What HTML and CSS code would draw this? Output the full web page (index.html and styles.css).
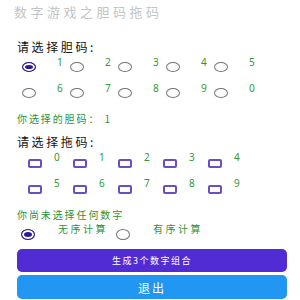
FILE: index.html
```html
<!DOCTYPE html>
<html lang="zh-CN">
<head>
  <meta charset="UTF-8">
  <meta name="viewport" content="width=device-width, initial-scale=1.0">
  <title>数字游戏之胆码拖码</title>
  <link rel="stylesheet" href="styles.css">
</head>
<body>
  <div class="page">
    <div class="title">数字游戏之胆码拖码</div>
    <div class="content">
      <div class="label">请选择胆码:</div>
      <div class="radio-grid">
        <div class="opt"><span class="radio checked"></span><span class="num">1</span></div>
        <div class="opt"><span class="radio"></span><span class="num">2</span></div>
        <div class="opt"><span class="radio"></span><span class="num">3</span></div>
        <div class="opt"><span class="radio"></span><span class="num">4</span></div>
        <div class="opt"><span class="radio"></span><span class="num">5</span></div>
        <div class="opt"><span class="radio"></span><span class="num">6</span></div>
        <div class="opt"><span class="radio"></span><span class="num">7</span></div>
        <div class="opt"><span class="radio"></span><span class="num">8</span></div>
        <div class="opt"><span class="radio"></span><span class="num">9</span></div>
        <div class="opt"><span class="radio"></span><span class="num">0</span></div>
      </div>
      <div class="hint">你选择的胆码： 1</div>
      <div class="label">请选择拖码:</div>
      <div class="check-grid">
        <div class="opt"><span class="box"></span><span class="num">0</span></div>
        <div class="opt"><span class="box"></span><span class="num">1</span></div>
        <div class="opt"><span class="box"></span><span class="num">2</span></div>
        <div class="opt"><span class="box"></span><span class="num">3</span></div>
        <div class="opt"><span class="box"></span><span class="num">4</span></div>
        <div class="opt"><span class="box"></span><span class="num">5</span></div>
        <div class="opt"><span class="box"></span><span class="num">6</span></div>
        <div class="opt"><span class="box"></span><span class="num">7</span></div>
        <div class="opt"><span class="box"></span><span class="num">8</span></div>
        <div class="opt"><span class="box"></span><span class="num">9</span></div>
      </div>
      <div class="hint">你尚未选择任何数字</div>
      <div class="mode-row">
        <div class="mode"><span class="radio checked"></span><span class="mode-text">无序计算</span></div>
        <div class="mode"><span class="radio"></span><span class="mode-text">有序计算</span></div>
      </div>
      <button class="btn btn-gen">生成3个数字组合</button>
      <button class="btn btn-exit">退出</button>
    </div>
  </div>
</body>
</html>
```

FILE: styles.css
```css
body {
  margin: 0;
  background: #fff;
  font-family: "Noto Sans CJK SC", "Noto Sans", sans-serif;
}
.page {
  width: 300px;
  height: 300px;
  overflow: hidden;
}
.title {
  height: 24px;
  line-height: 24px;
  padding-left: 14px;
  font-size: 13px;
  letter-spacing: 3.5px;
  color: #c4c4c4;
}
.content {
  padding: 0 13px 0 17px;
}
.label {
  margin-top: 15px;
  height: 15px;
  line-height: 15px;
  font-size: 12px;
  letter-spacing: 2.6px;
  color: #111;
}
.hint {
  margin-top: 8px;
  height: 14px;
  line-height: 13px;
  font-size: 10px;
  letter-spacing: 1.9px;
  color: #2e9234;
}
.hint + .label {
  margin-top: 8px;
}
.radio-grid,
.check-grid {
  display: grid;
  grid-template-columns: repeat(5, 48px);
  row-gap: 4px;
  margin-top: 2px;
  margin-left: 5px;
}
.check-grid {
  grid-template-columns: repeat(5, 45px);
  margin-top: 3px;
  margin-left: 11px;
}
.opt {
  display: flex;
  align-items: center;
  height: 22px;
}
.num {
  align-self: flex-start;
  line-height: 11px;
  margin-left: 21px;
  margin-top: 1px;
  font-family: "Noto Sans", sans-serif;
  font-size: 10px;
  color: #2e9a34;
}
.check-grid .num {
  margin-left: 12px;
  margin-top: 0;
}
.radio {
  flex: none;
  width: 14px;
  height: 10px;
  box-sizing: border-box;
  border: 1.5px solid #727272;
  border-radius: 50%;
}
.radio.checked {
  border-color: #2b1c94;
  background: #2b1c94;
  box-shadow: inset 0 0 0 2px #fff;
}
.box {
  flex: none;
  width: 14px;
  height: 9px;
  box-sizing: border-box;
  border: 2px solid #6a4ec4;
  border-radius: 2px;
}
.mode-row {
  display: flex;
  height: 24px;
  margin-left: 4px;
}
.mode {
  display: flex;
  align-items: center;
}
.mode:first-child {
  width: 95px;
}
.mode .radio {
  height: 11px;
}
.mode-text {
  align-self: flex-start;
  line-height: 12px;
  margin-top: 1px;
  margin-left: 23px;
  font-size: 10px;
  letter-spacing: 2.5px;
  color: #2e9234;
}
.btn {
  display: block;
  width: 100%;
  border: none;
  border-radius: 5px;
  color: #fff;
  font-family: "Noto Sans CJK SC", sans-serif;
  padding: 0;
}
.btn-gen {
  margin-top: 3px;
  height: 23px;
  background: #512bd4;
  font-size: 9px;
  letter-spacing: 1.5px;
}
.btn-exit {
  margin-top: 3px;
  height: 24px;
  background: #2196f3;
  font-size: 12px;
  letter-spacing: 2px;
}
```
